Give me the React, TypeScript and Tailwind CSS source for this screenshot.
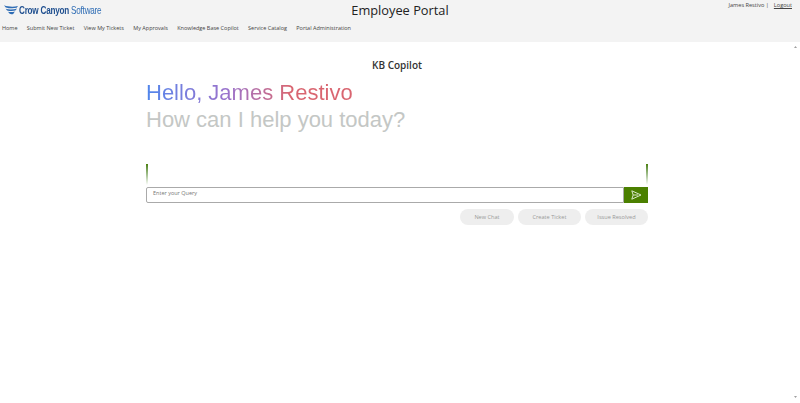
const navItems = [
  'Home',
  'Submit New Ticket',
  'View My Tickets',
  'My Approvals',
  'Knowledge Base Copilot',
  'Service Catalog',
  'Portal Administration',
];

function Logo() {
  return (
    <div className="flex items-center gap-[1px] h-[14px] pl-[4px]">
      <svg width="14" height="10" viewBox="0 0 16 11" className="shrink-0">
        <path d="M0 0 C5 2 11 2 16 1 L14.5 3 C10 4 5 3.5 2 2.5 Z" fill="#2f6db5" />
        <path d="M2 4 C6 5.5 11 5 15 3.8 L13 6.2 C10 7 6 6.8 3.5 6 Z" fill="#2f6db5" />
        <path d="M4.5 7.5 C7 8.2 10 8 12.5 7.2 L10.5 10 C9 10.6 7.5 10.4 6.5 9.8 Z" fill="#2f6db5" />
      </svg>
      <span className="text-[11px] leading-none tracking-[-0.3px] text-[#2f6db5] [font-family:'Liberation_Sans',sans-serif] scale-x-[0.74] origin-left whitespace-nowrap">
        <span className="font-bold text-[#1f4f8f]">Crow Canyon</span> Software
      </span>
    </div>
  );
}

export default function App() {
  return (
    <div className="h-[403px] w-[800px] overflow-hidden bg-white text-[#333] [font-family:'Open_Sans',sans-serif]">
      <header className="h-[42px] bg-[#f3f3f3]">
        <div className="flex items-start justify-between">
          <div className="pt-[3px] w-[200px]">
            <Logo />
          </div>
          <h1 className="text-[12.8px] leading-[20px] text-[#222]">Employee Portal</h1>
          <div className="w-[200px] flex justify-end gap-[5px] pr-[8px] pt-[1px] text-[5.6px] leading-[8px] text-[#444]">
            <span>James Restivo |</span>
            <a className="underline">Logout</a>
          </div>
        </div>
        <nav className="flex gap-[9.3px] pl-[2px] pt-[4px] text-[5.5px] leading-[9px] text-[#444] whitespace-nowrap">
          {navItems.map((item) => (
            <span key={item}>{item}</span>
          ))}
        </nav>
      </header>

      <div className="flex h-[361px]">
        <main className="flex flex-col items-center w-[794px]">
          <h2 className="mt-[16px] text-[10px] leading-[14px] font-semibold text-[#333]">KB Copilot</h2>

          <div className="w-[502px] mt-[7px]">
            <div className="[font-family:'Liberation_Sans',sans-serif] text-[22px] leading-[27px]">
              <div className="w-fit bg-gradient-to-r from-[#4f86ec] via-[#9b72cb] via-40% to-[#d96570] to-70% bg-clip-text text-transparent">
                Hello, James Restivo
              </div>
              <div className="text-[#c4c7c5]">How can I help you today?</div>
            </div>

            <div className="mt-[31px] h-[21px] flex justify-between">
              <div className="w-[2px] h-full bg-gradient-to-b from-[#4b8000] to-white" />
              <div className="w-[2px] h-full bg-gradient-to-b from-[#4b8000] to-white" />
            </div>

            <div className="mt-[2px] flex h-[16px]">
              <div className="flex-1 border border-[#aaa] rounded-l-[2px] pl-[6px] text-[5.5px] leading-[11px] text-[#777]">
                Enter your Query
              </div>
              <button className="w-[24px] bg-[#4b8000] flex items-center justify-center">
                <svg width="11" height="10" viewBox="0 0 11 10" fill="none" stroke="#d9e6c8" strokeWidth="1" strokeLinejoin="round">
                  <path d="M0.8 0.8 L10 5 L0.8 9.2 L2.2 5 Z" />
                  <path d="M2.2 5 H7" />
                </svg>
              </button>
            </div>

            <div className="mt-[6px] flex justify-end gap-[4px] text-[5.6px] text-[#999]">
              <button className="h-[16px] w-[54px] rounded-full bg-[#eeeeee]">New Chat</button>
              <button className="h-[16px] w-[63px] rounded-full bg-[#eeeeee]">Create Ticket</button>
              <button className="h-[16px] w-[63px] rounded-full bg-[#eeeeee]">Issue Resolved</button>
            </div>
          </div>
        </main>

        {/* scrollbar arrows */}
        <div className="w-[6px] flex flex-col items-start justify-between pt-[4px] pb-[5px]">
          <svg width="3" height="2" viewBox="0 0 3 2" fill="#a0a0a0">
            <path d="M1.5 0 L3 2 H0 Z" />
          </svg>
          <svg width="3" height="2" viewBox="0 0 3 2" fill="#a0a0a0">
            <path d="M0 0 H3 L1.5 2 Z" />
          </svg>
        </div>
      </div>
    </div>
  );
}
